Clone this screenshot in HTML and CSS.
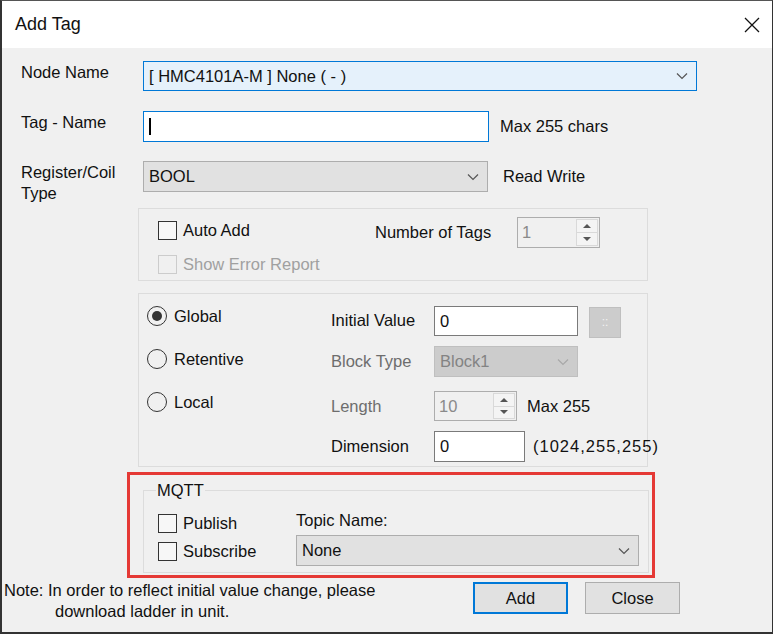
FILE: index.html
```html
<!DOCTYPE html>
<html lang="en">
<head>
  <meta charset="UTF-8" />
  <meta name="viewport" content="width=device-width, initial-scale=1.0"/>
  <title>Add Tag</title>
  <link rel="stylesheet" href="styles.css">
</head>
<body>
  <div class="window">
    <div class="titlebar">
      <span class="title">Add Tag</span>
      <svg class="close-x" width="16" height="16" viewBox="0 0 16 16">
        <path d="M1 1L15 15M15 1L1 15" stroke="#111" stroke-width="1.3" fill="none"/>
      </svg>
    </div>

    <div class="content">
      <div class="form">
        <div class="row row-node">
          <div class="label">Node Name</div>
          <div class="combo combo-focus node-combo">
            <span>[ HMC4101A-M ] None ( - )</span>
            <svg class="chevron" width="12" height="8" viewBox="0 0 12 8"><path d="M1 1.5L6 6.5L11 1.5" fill="none" stroke="#555" stroke-width="1.2"/></svg>
          </div>
        </div>

        <div class="row row-tag">
          <div class="label">Tag - Name</div>
          <div class="textbox textbox-focus tag-box"><span class="caret"></span></div>
          <span class="hint hint-max">Max 255 chars</span>
        </div>

        <div class="row row-type">
          <div class="label">Register/Coil<br>Type</div>
          <div class="combo type-combo">
            <span>BOOL</span>
            <svg class="chevron" width="12" height="8" viewBox="0 0 12 8"><path d="M1 1.5L6 6.5L11 1.5" fill="none" stroke="#555" stroke-width="1.2"/></svg>
          </div>
          <span class="hint hint-rw">Read Write</span>
        </div>

        <!-- auto add group -->
        <div class="group group-auto">
          <div class="checks">
            <div class="check"><span class="box"></span>Auto Add</div>
            <div class="check check-disabled"><span class="box"></span>Show Error Report</div>
          </div>
          <div class="tag-count">
            <span class="count-label">Number of Tags</span>
            <div class="spinner count-spin">
              <span class="spin-value">1</span>
              <div class="spin-buttons"><span class="spin-btn"><i class="tri-up"></i></span><span class="spin-btn"><i class="tri-down"></i></span></div>
            </div>
          </div>
        </div>

        <!-- scope / value group -->
        <div class="group group-scope">
          <div class="radios">
            <div class="radio"><span class="dot dot-on"></span>Global</div>
            <div class="radio"><span class="dot"></span>Retentive</div>
            <div class="radio"><span class="dot"></span>Local</div>
          </div>
          <div class="fields">
            <div class="field field-initial">
              <span class="field-label">Initial Value</span>
              <div class="textbox initial-box">0</div>
              <div class="dots-btn">::</div>
            </div>
            <div class="field field-block">
              <span class="field-label disabled-text">Block Type</span>
              <div class="combo combo-disabled block-combo">
                <span>Block1</span>
                <svg class="chevron" width="12" height="8" viewBox="0 0 12 8"><path d="M1 1.5L6 6.5L11 1.5" fill="none" stroke="#a8a8a8" stroke-width="1.2"/></svg>
              </div>
            </div>
            <div class="field field-length">
              <span class="field-label disabled-text">Length</span>
              <div class="spinner length-spin">
                <span class="spin-value">10</span>
                <div class="spin-buttons"><span class="spin-btn"><i class="tri-up"></i></span><span class="spin-btn"><i class="tri-down"></i></span></div>
              </div>
              <span class="field-note note-max">Max 255</span>
            </div>
            <div class="field field-dim">
              <span class="field-label">Dimension</span>
              <div class="textbox dim-box">0</div>
              <span class="field-note note-dim">(1024,255,255)</span>
            </div>
          </div>
        </div>

        <!-- highlighted MQTT block -->
        <div class="mqtt-highlight">
          <fieldset class="mqtt">
            <legend>MQTT</legend>
            <div class="mqtt-body">
              <div class="checks mqtt-checks">
                <div class="check"><span class="box"></span>Publish</div>
                <div class="check"><span class="box"></span>Subscribe</div>
              </div>
              <div class="topic">
                <span class="topic-label">Topic Name:</span>
                <div class="combo topic-combo">
                  <span>None</span>
                  <svg class="chevron" width="12" height="8" viewBox="0 0 12 8"><path d="M1 1.5L6 6.5L11 1.5" fill="none" stroke="#555" stroke-width="1.2"/></svg>
                </div>
              </div>
            </div>
          </fieldset>
        </div>
      </div>

      <div class="footer">
        <div class="note">
          Note: In order to reflect initial value change, please
          <span class="note-indent">download ladder in unit.</span>
        </div>
        <div class="buttons">
          <div class="btn btn-default">Add</div>
          <div class="btn">Close</div>
        </div>
      </div>
    </div>
  </div>
</body>
</html>
```

FILE: styles.css
```css
body {
  margin: 0;
  background: #ffffff;
  font-family: "Liberation Sans", Arial, sans-serif;
  font-size: 16.5px;
  color: #111;
}
.window {
  width: 773px;
  height: 634px;
  box-sizing: border-box;
  border-top: 1px solid #555;
  border-left: 2px solid #333;
  border-right: 1px solid #333;
  border-bottom: 2px solid #333;
  display: flex;
  flex-direction: column;
}
.titlebar {
  height: 47px;
  flex-shrink: 0;
  background: #fff;
  display: flex;
  align-items: center;
  justify-content: space-between;
  padding: 0 12px 0 13px;
}
.title {
  font-size: 18px;
}
.content {
  flex: 1;
  background: #f0f0f0;
  padding: 13px 0 0 2px;
}
.form {
  padding-left: 17px;
}
.row {
  display: flex;
  align-items: flex-start;
}
.label {
  width: 122px;
  line-height: 21px;
  padding-top: 1px;
  flex-shrink: 0;
}
.row-node {
  margin-bottom: 20px;
}
.row-tag {
  margin-bottom: 19px;
}

/* combo boxes */
.combo {
  box-sizing: border-box;
  display: flex;
  align-items: center;
  justify-content: space-between;
  padding: 0 8px 0 5px;
  height: 31px;
  flex-shrink: 0;
  background: #e1e1e1;
  border: 1px solid #adadad;
}
.combo-focus {
  background: #e5f1fb;
  border-color: #0078d7;
}
.combo-disabled {
  background: #cccccc;
  border-color: #bfbfbf;
  color: #838383;
}
.node-combo {
  width: 554px;
  height: 30px;
}
.type-combo {
  width: 345px;
}

/* text boxes */
.textbox {
  box-sizing: border-box;
  height: 31px;
  flex-shrink: 0;
  background: #fff;
  border: 1px solid #7a7a7a;
  padding-left: 5px;
  line-height: 29px;
}
.textbox-focus {
  border-color: #0078d7;
}
.tag-box {
  width: 346px;
  display: flex;
  align-items: center;
}
.caret {
  width: 1.5px;
  height: 17px;
  background: #000;
}
.hint {
  line-height: 31px;
}
.hint-max {
  margin-left: 11px;
}
.hint-rw {
  margin-left: 15px;
}

/* group boxes */
.group {
  box-sizing: border-box;
  width: 510px;
  margin-left: 117px;
  border: 1px solid #dcdcdc;
  display: flex;
}
.group-auto {
  margin-top: 4px;
  height: 73px;
  padding: 12px 0 0 19px;
}
.checks {
  width: 217px;
  flex-shrink: 0;
  display: flex;
  flex-direction: column;
  gap: 15px;
}
.check {
  display: flex;
  align-items: center;
  gap: 6px;
  height: 19px;
}
.box {
  box-sizing: border-box;
  width: 19px;
  height: 19px;
  border: 1px solid #333;
  background: #f7f7f7;
}
.check-disabled {
  color: #a0a0a0;
}
.check-disabled .box {
  border-color: #cccccc;
  background: #f0f0f0;
}
.tag-count {
  display: flex;
  align-items: center;
  margin-top: -4px;
  height: 31px;
}
.count-label {
  width: 142px;
}

/* spinners */
.spinner {
  box-sizing: border-box;
  width: 83px;
  height: 31px;
  flex-shrink: 0;
  border: 1px solid #adadad;
  background: #f0f0f0;
  display: flex;
}
.length-spin {
  height: 30px;
}
.spin-value {
  flex: 1;
  padding-left: 4px;
  color: #8a8a8a;
  line-height: 29px;
}
.spin-buttons {
  width: 22px;
  margin: 1px 1px 1px 0;
  display: flex;
  flex-direction: column;
}
.spin-btn {
  flex: 1;
  display: flex;
  align-items: center;
  justify-content: center;
  background: #f4f4f4;
  border: 1px solid #d9d9d9;
}
.spin-btn + .spin-btn {
  border-top: none;
}
.tri-up {
  border-left: 4px solid transparent;
  border-right: 4px solid transparent;
  border-bottom: 4px solid #555;
}
.tri-down {
  border-left: 4px solid transparent;
  border-right: 4px solid transparent;
  border-top: 4px solid #555;
}

/* scope group */
.group-scope {
  margin-top: 12px;
  height: 174px;
  padding: 11px 0 0 8px;
}
.radios {
  width: 184px;
  flex-shrink: 0;
  margin-top: 1px;
  display: flex;
  flex-direction: column;
  gap: 23px;
}
.radio {
  display: flex;
  align-items: center;
  gap: 7px;
  height: 20px;
}
.dot {
  box-sizing: border-box;
  width: 20px;
  height: 20px;
  border: 1px solid #333;
  border-radius: 50%;
  display: flex;
  align-items: center;
  justify-content: center;
}
.dot-on::after {
  content: "";
  width: 10px;
  height: 10px;
  border-radius: 50%;
  background: #333;
}
.fields {
  display: flex;
  flex-direction: column;
}
.field {
  display: flex;
  align-items: center;
  height: 31px;
  white-space: nowrap;
}
.field-label {
  width: 103px;
  flex-shrink: 0;
}
.disabled-text {
  color: #6d6d6d;
}
.field-initial {
  margin-bottom: 10px;
}
.field-block {
  margin-bottom: 14px;
}
.field-length {
  height: 30px;
  margin-bottom: 10px;
}
.initial-box {
  width: 144px;
  height: 30px;
  line-height: 28px;
}
.dots-btn {
  box-sizing: border-box;
  width: 32px;
  height: 31px;
  flex-shrink: 0;
  margin-left: 11px;
  margin-top: 4px;
  background: #cccccc;
  border: 1px solid #bfbfbf;
  color: #f2f2f2;
  font-size: 12px;
  text-align: center;
  line-height: 29px;
}
.block-combo {
  width: 144px;
}
.dim-box {
  width: 91px;
}
.note-max {
  margin-left: 10px;
}
.note-dim {
  margin-left: 8px;
  letter-spacing: 1px;
}

/* MQTT */
.mqtt-highlight {
  box-sizing: border-box;
  width: 528px;
  height: 106px;
  margin: 5px 0 0 106px;
  border: 3px solid #e53935;
  padding: 5px 0 0 13px;
}
.mqtt {
  box-sizing: border-box;
  width: 506px;
  margin: 0;
  padding: 10px 0 6px 14px;
  border: 1px solid #dcdcdc;
}
.mqtt legend {
  padding: 0 1px;
  margin-left: -2px;
  line-height: 20px;
}
.mqtt-body {
  display: flex;
}
.mqtt-checks {
  width: 138px;
  margin-top: 4px;
  gap: 9px;
}
.topic {
  display: flex;
  flex-direction: column;
}
.topic-label {
  line-height: 21px;
}
.topic-combo {
  width: 343px;
  margin-top: 4px;
}

/* footer */
.footer {
  display: flex;
  align-items: flex-start;
}
.note {
  width: 469px;
  margin-top: 2px;
  line-height: 21px;
}
.note-indent {
  display: block;
  padding-left: 51px;
}
.buttons {
  display: flex;
  gap: 17px;
  margin-top: 4px;
}
.btn {
  box-sizing: border-box;
  width: 95px;
  height: 32px;
  background: #e1e1e1;
  border: 1px solid #adadad;
  text-align: center;
  line-height: 30px;
}
.btn-default {
  border: 2px solid #0078d7;
  line-height: 28px;
}
```
